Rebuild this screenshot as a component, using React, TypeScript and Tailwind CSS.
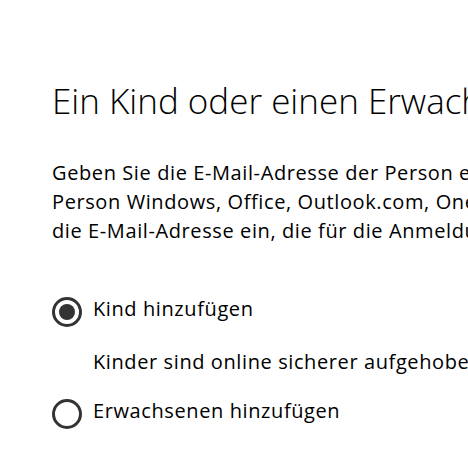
import { useState } from 'react';

const options = [
  {
    id: 'child',
    label: 'Kind hinzufügen',
    hint: 'Kinder sind online sicherer aufgehoben, wenn ihr Konto von einem Erwachsenen verwaltet wird.',
  },
  { id: 'adult', label: 'Erwachsenen hinzufügen' },
];

export default function App() {
  const [selected, setSelected] = useState('child');

  return (
    <div
      className="w-[468px] h-[468px] overflow-hidden bg-white text-black"
      style={{ fontFamily: '"Open Sans", "Noto Sans", sans-serif' }}
    >
      <div className="w-[900px] pl-[52px] pt-[83px]">
        <h1 className="text-[35px] leading-none font-light whitespace-nowrap">
          Ein Kind oder einen Erwachsenen hinzufügen?
        </h1>

        <p className="mt-[40px] text-[20px] leading-[29px] tracking-[0.6px]">
          <span className="block whitespace-nowrap">
            Geben Sie die E-Mail-Adresse der Person ein, die Sie hinzufügen möchten. Wenn die
          </span>
          <span className="block whitespace-nowrap">
            Person Windows, Office, Outlook.com, OneDrive, Skype oder Xbox verwendet, geben Sie
          </span>
          <span className="block whitespace-nowrap">
            die E-Mail-Adresse ein, die für die Anmeldung verwendet wird.
          </span>
        </p>

        <div className="mt-[49px] flex flex-col gap-[20px] tracking-[0.6px]">
          {options.map(opt => (
            <div key={opt.id} className="flex flex-col gap-[20px]">
              <button
                onClick={() => setSelected(opt.id)}
                className="flex items-start gap-[11px] text-left"
              >
                <span className="mt-[3px] w-[30px] h-[30px] shrink-0 rounded-full border-[3px] border-[#333333] flex items-center justify-center">
                  {selected === opt.id && (
                    <span className="w-4 h-4 rounded-full bg-[#333333]" />
                  )}
                </span>
                <span className="text-[20px] leading-[29px] whitespace-nowrap">{opt.label}</span>
              </button>
              {opt.hint && selected === opt.id && (
                <div className="pl-[41px] text-[20px] leading-[29px] whitespace-nowrap">{opt.hint}</div>
              )}
            </div>
          ))}
        </div>
      </div>
    </div>
  );
}
